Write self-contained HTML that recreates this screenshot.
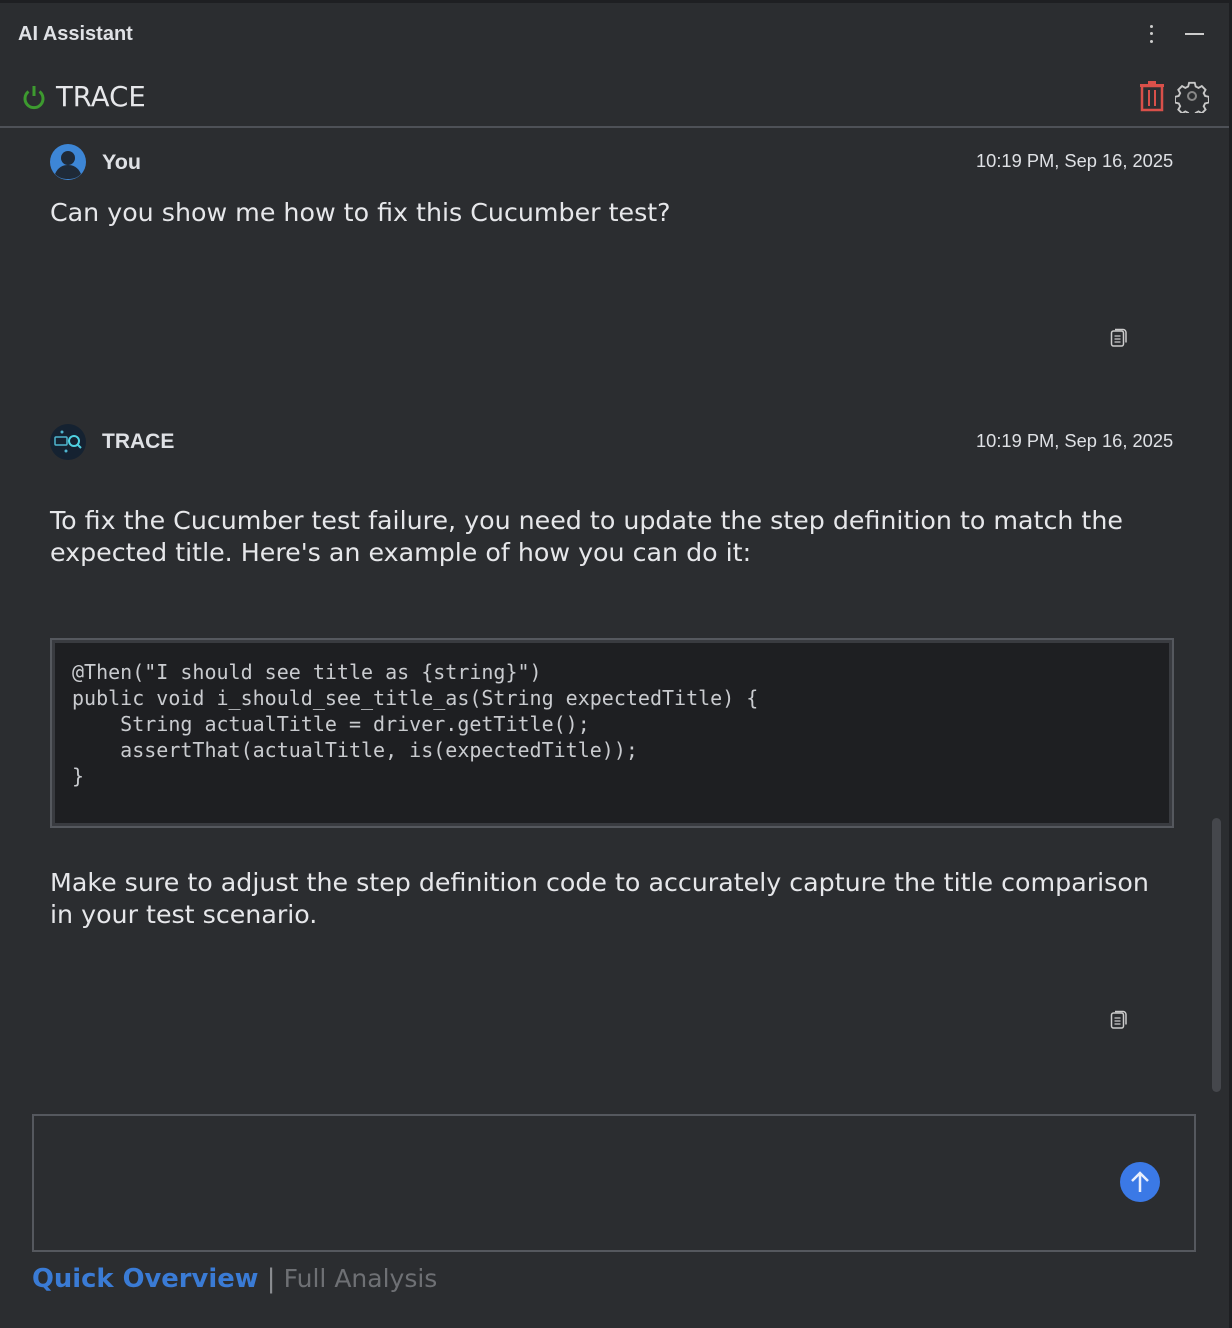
<!DOCTYPE html>
<html><head><meta charset="utf-8"><style>
*{margin:0;padding:0;box-sizing:border-box}
body{width:1232px;height:1328px;background:#2b2d30;position:relative;overflow:hidden;font-family:"Liberation Sans",sans-serif;color:#dfe1e5}
.a{position:absolute;white-space:nowrap}
.body{font-family:"DejaVu Sans","Liberation Sans",sans-serif;font-size:25.3px;color:#e6e7ea;line-height:32px}
.ts{font-size:18.3px;color:#dfe1e5}
.code{font-family:"DejaVu Sans Mono","Liberation Mono",monospace;font-size:20px;line-height:26px;color:#c9cbcf;white-space:pre}
</style></head><body>
<div class="a" style="left:0;top:0;width:1232px;height:3px;background:#1e1f22"></div>
<div class="a" style="left:1229px;top:0;width:3px;height:1328px;background:#1e1f22"></div>
<div class="a" style="left:18px;top:23px;font-size:20px;font-weight:bold;color:#dfe1e5">AI Assistant</div>
<div class="a" style="left:1150px;top:25px;width:3px;height:3px;background:#ccc;border-radius:50%;box-shadow:0 7px 0 #ccc,0 15px 0 #ccc"></div>
<div class="a" style="left:1185px;top:33px;width:19px;height:2px;background:#ccc"></div>
<svg class="a" style="left:21px;top:84px" width="26" height="26" viewBox="0 0 26 26"><path d="M7.5 7.5A9 9 0 1 0 18.5 7.5" fill="none" stroke="#3d9a2f" stroke-width="3"/><line x1="13" y1="2" x2="13" y2="12" stroke="#3d9a2f" stroke-width="3"/></svg>
<div class="a" style="left:56px;top:81px;font-size:27.5px;color:#e6e7ea;font-family:'DejaVu Sans',sans-serif">TRACE</div>
<svg class="a" style="left:1139px;top:80px" width="26" height="32" viewBox="0 0 26 32"><rect x="3" y="6" width="20" height="24" fill="none" stroke="#d9504a" stroke-width="2.5"/><rect x="1" y="4" width="24" height="3" fill="#d9504a"/><rect x="9" y="1" width="8" height="3" fill="#d9504a"/><line x1="10" y1="10" x2="10" y2="26" stroke="#d9504a" stroke-width="2"/><line x1="16" y1="10" x2="16" y2="26" stroke="#d9504a" stroke-width="2"/></svg>
<svg class="a" style="left:1175px;top:79px" width="34" height="34" viewBox="0 0 34 34"><path d="M14 3h6l1 4 3 1.5 3.5-2 4 4-2 3.5 1.5 3 4 1v6l-4 1-1.5 3 2 3.5-4 4-3.5-2-3 1.5-1 4h-6l-1-4-3-1.5-3.5 2-4-4 2-3.5-1.5-3-4-1v-6l4-1 1.5-3-2-3.5 4-4 3.5 2 3-1.5z" transform="scale(0.94) translate(1,1)" fill="none" stroke="#c8c8c8" stroke-width="2"/><circle cx="17" cy="17" r="4" fill="none" stroke="#888" stroke-width="2"/></svg>
<div class="a" style="left:0;top:126px;width:1229px;height:2px;background:#4e5157"></div>
<svg class="a" style="left:50px;top:144px" width="36" height="36" viewBox="0 0 36 36"><circle cx="18" cy="18" r="18" fill="#3d86d6"/><circle cx="18" cy="14" r="7" fill="#1f2a38"/><path d="M5 30c3-7 8-9 13-9s10 2 13 9c-4 4-8 5-13 5s-9-1-13-5z" fill="#1f2a38"/></svg>
<div class="a" style="left:102px;top:150px;font-size:21.5px;font-weight:bold">You</div>
<div class="a ts" style="left:976px;top:150px">10:19 PM, Sep 16, 2025</div>
<div class="a body" style="left:50px;top:197px">Can you show me how to fix this Cucumber test?</div>
<svg class="a" style="left:1110px;top:327px" width="20" height="21" viewBox="0 0 20 21"><rect x="1.5" y="4" width="12" height="15" rx="2" fill="none" stroke="#ccc" stroke-width="1.5"/><path d="M5 2.5h8a3 3 0 0 1 3 3v10" fill="none" stroke="#ccc" stroke-width="1.5"/><path d="M4.5 9h6M4.5 12h6M4.5 15h6" stroke="#ccc" stroke-width="1.3"/></svg>
<svg class="a" style="left:50px;top:424px" width="36" height="36" viewBox="0 0 36 36"><circle cx="18" cy="18" r="18" fill="#152231"/><rect x="5" y="13" width="12" height="8" rx="1" fill="none" stroke="#4fb6d0" stroke-width="1.5"/><circle cx="24" cy="17" r="5" fill="none" stroke="#4fd0e0" stroke-width="2"/><line x1="27.5" y1="20.5" x2="31" y2="24" stroke="#4fd0e0" stroke-width="2"/><circle cx="12" cy="8" r="1.5" fill="#4fb6d0"/><circle cx="16" cy="27" r="1.5" fill="#4fb6d0"/></svg>
<div class="a" style="left:102px;top:430px;font-size:21px;font-weight:bold">TRACE</div>
<div class="a ts" style="left:976px;top:430px">10:19 PM, Sep 16, 2025</div>
<div class="a body" style="left:50px;top:505px">To fix the Cucumber test failure, you need to update the step definition to match the<br>expected title. Here's an example of how you can do it:</div>
<div class="a" style="left:50px;top:638px;width:1124px;height:190px;border:2px solid #55585e;padding:3px;background:#393b40"><div style="width:100%;height:100%;background:#1e1f22"></div></div>
<div class="a code" style="left:72px;top:659px">@Then("I should see title as {string}")
public void i_should_see_title_as(String expectedTitle) {
    String actualTitle = driver.getTitle();
    assertThat(actualTitle, is(expectedTitle));
}</div>
<div class="a body" style="left:50px;top:867px">Make sure to adjust the step definition code to accurately capture the title comparison<br>in your test scenario.</div>
<svg class="a" style="left:1110px;top:1009px" width="20" height="21" viewBox="0 0 20 21"><rect x="1.5" y="4" width="12" height="15" rx="2" fill="none" stroke="#ccc" stroke-width="1.5"/><path d="M5 2.5h8a3 3 0 0 1 3 3v10" fill="none" stroke="#ccc" stroke-width="1.5"/><path d="M4.5 9h6M4.5 12h6M4.5 15h6" stroke="#ccc" stroke-width="1.3"/></svg>
<div class="a" style="left:1212px;top:818px;width:9px;height:274px;border-radius:5px;background:#45474c"></div>
<div class="a" style="left:32px;top:1114px;width:1164px;height:138px;border:2px solid #55585e"></div>
<svg class="a" style="left:1120px;top:1162px" width="40" height="40" viewBox="0 0 40 40"><circle cx="20" cy="20" r="20" fill="#3b79e6"/><path d="M20 30V11M12 19l8-8 8 8" fill="none" stroke="#e8eefc" stroke-width="2.5"/></svg>
<div class="a" style="left:32px;top:1264px;font-family:'DejaVu Sans',sans-serif;font-size:25.8px"><b style="color:#3a7bd5">Quick Overview</b><span style="color:#8a8c90"> | </span><span style="color:#6e7074;font-size:25px">Full Analysis</span></div>
</body></html>
